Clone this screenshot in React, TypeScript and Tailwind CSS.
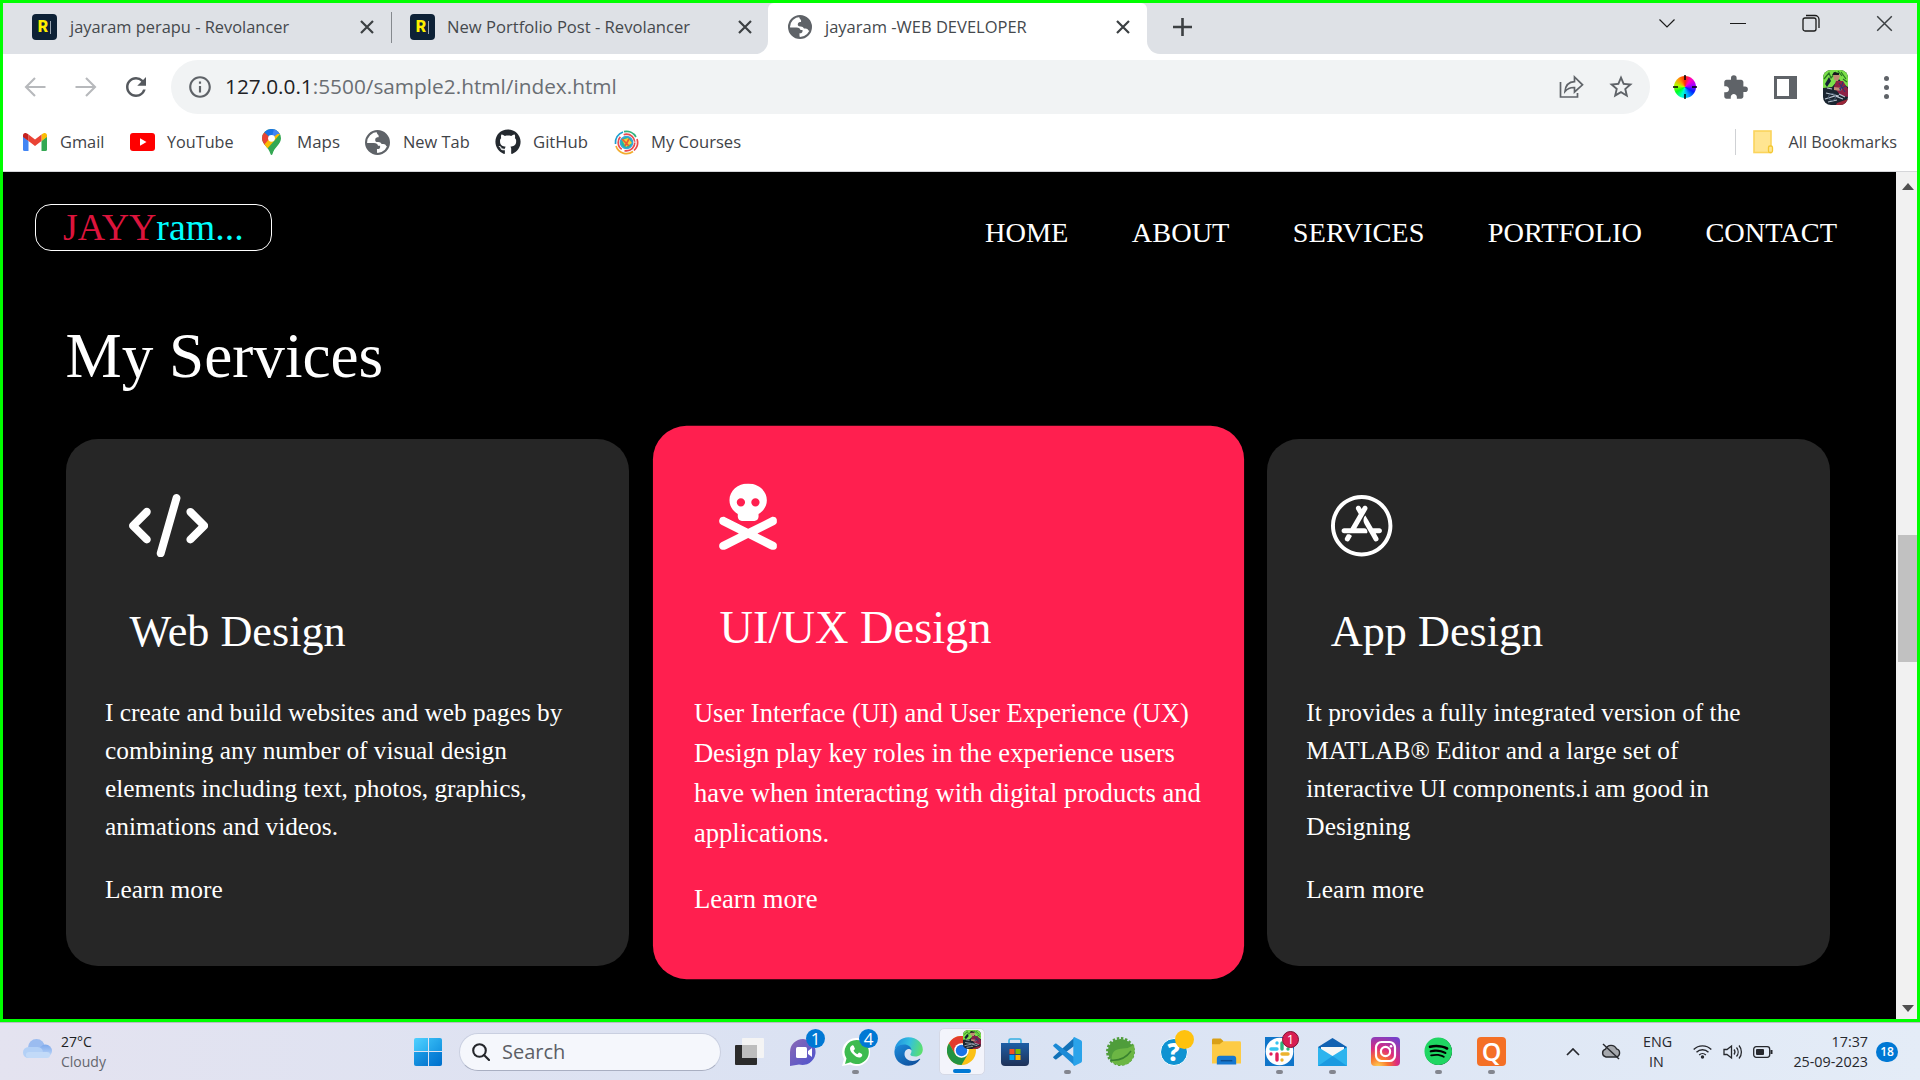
import type { ReactNode } from "react";
import { FaAppStore, FaCode, FaGithub, FaSkullCrossbones, FaSpotify } from "react-icons/fa6";
import { MdExtension, MdInfoOutline, MdRefresh, MdStarBorder } from "react-icons/md";

/* ---------- Browser tab strip ---------- */

function RevolancerIcon() {
  return (
    <span className="flex h-[26px] w-[25px] shrink-0 items-center justify-center gap-[2px] rounded-[4px] bg-[#0d2136]">
      <span className="font-['Roboto'] text-[16px] leading-none font-black text-[#ffee00]">R</span>
      <span className="h-[13px] w-px bg-[#9aa5b1]" />
    </span>
  );
}

function GlobeIcon({ className }: { className: string }) {
  return (
    <svg viewBox="0 0 24 24" className={className}>
      <circle cx="12" cy="12" r="11" fill="#fff" stroke="#5f6368" strokeWidth="2" />
      <path d="M11 1c6.500-.5 12 4.500 12 11 0 1.500-.3 3-.8 4l-1.700-.5c-.7-1.200-1.200-2-3-2h-1.500c-.8-1.300-1.500-2-3.200-2-2.200.2-3.300-.8-3-2.500.3-1.600 1.400-2 3.200-2 .4-1.500 0-2.200-1-3C11.300 3 11 2 11 1z" fill="#5f6368" />
      <path d="M1 12.500h7.500c2.500 0 3.500 1 4 2.500h2c.3 2.500-.5 3.300-3 3.300v2.500L12 23C5.800 23 1 18.500 1 12.500z" fill="#5f6368" />
    </svg>
  );
}

function CloseX({ size = 14, width = 2.2 }: { size?: number; width?: number }) {
  return (
    <svg width={size} height={size} viewBox="0 0 14 14" className="shrink-0" fill="none" stroke="#3c4043" strokeWidth={width}>
      <path d="M1 1l12 12M13 1L1 13" />
    </svg>
  );
}

function TabStrip() {
  return (
    <div className="flex h-[51px] bg-white text-[#45494d]">
      <div className="flex h-[51px] w-[389px] items-center bg-[#dee1e6] pb-[3px] pl-[29px]">
        <RevolancerIcon />
        <span className="ml-[13px] flex-1 text-[16.4px]">jayaram perapu - Revolancer</span>
        <CloseX />
        <span className="ml-[17px] h-[31px] w-px bg-[#85898e]" />
      </div>
      <div className="flex h-[51px] w-[376px] items-center rounded-br-[13px] bg-[#dee1e6] pb-[3px] pl-[18px]">
        <RevolancerIcon />
        <span className="ml-[12px] flex-1 text-[16.6px]">New Portfolio Post - Revolancer</span>
        <CloseX />
        <span className="w-[16px]" />
      </div>
      <div className="h-[51px] bg-[linear-gradient(#dee1e6_20px,#ffffff_20px)]">
        <div className="flex h-[51px] w-[379px] items-center rounded-t-[6px] bg-white pb-[3px] pl-[20px]">
          <GlobeIcon className="size-[24px] shrink-0" />
          <span className="ml-[13px] flex-1 text-[16.5px]">jayaram -WEB DEVELOPER</span>
          <CloseX />
          <span className="w-[17px]" />
        </div>
      </div>
      <div className="flex h-[51px] flex-1 items-start rounded-bl-[13px] bg-[#dee1e6]">
        <svg width="19" height="18" viewBox="0 0 19 18" className="mt-[15px] ml-[26px]" stroke="#3c4043" strokeWidth="2.6">
          <path d="M9.5 0v18M0 9h19" />
        </svg>
        <span className="flex-1" />
        <div className="mt-[10px] flex h-5 items-center text-[#1b1b1b]">
          <svg width="16" height="9" viewBox="0 0 16 9" fill="none" stroke="currentColor" strokeWidth="1.2">
            <path d="M.5.5L8 8l7.500-7.500" />
          </svg>
          <span className="ml-[55px] h-px w-[16px] bg-[#1b1b1b]" />
          <svg width="18" height="18" viewBox="0 0 18 18" className="ml-[56px]" fill="none" stroke="currentColor" strokeWidth="1.3">
            <rect x="1" y="4" width="13" height="13" rx="2" />
            <path d="M4 1.500h9a4 4 0 0 1 4 4V14" />
          </svg>
          <span className="ml-[56px] flex">
            <CloseX size={17} width={1.2} />
          </span>
          <span className="w-[24px]" />
        </div>
      </div>
    </div>
  );
}

/* ---------- Address bar ---------- */

function Arrow({ flip = false }: { flip?: boolean }) {
  return (
    <svg width="22" height="20" viewBox="0 0 22 20" className={flip ? "rotate-180" : ""} fill="none" stroke="#b7b9bc" strokeWidth="2.100">
      <path d="M21.500 10H2M11 1l-9 9 9 9" />
    </svg>
  );
}

function ColorWheel() {
  return (
    <span className="flex size-[24px] items-center justify-center">
      <span className="flex size-[22px] items-center justify-center rounded-full bg-[conic-gradient(#ff2a00,#ff00c8,#a000ff,#0020ff,#00a8ff,#00ffd0,#00ff20,#b0ff00,#ff9a00,#ff2a00)]">
        <svg width="24" height="24" viewBox="0 0 24 24" className="shrink-0" stroke="#000" strokeWidth="1.500">
          <path d="M12 0v5M12 19v5M0 12h5M19 12h5" />
        </svg>
      </span>
    </span>
  );
}

function Portrait({ className }: { className: string }) {
  return (
    <svg viewBox="0 0 25 35" className={className} preserveAspectRatio="none">
      <defs>
        <clipPath id="portrait">
          <rect width="25" height="35" rx="8" />
        </clipPath>
      </defs>
      <g clipPath="url(#portrait)">
        <rect width="25" height="35" fill="#1a2530" />
        <path d="M0 0h25v17l-5-3-4-5-7 8-9 1z" fill="#7be04a" />
        <path d="M1 9l5-6 2 5 5-6M18 2l5 7M15 1l4 5M20 9l4 3" stroke="#277422" strokeWidth="1.200" fill="none" />
        <path d="M2 14l4-7 2 4-4 6z" fill="#132034" />
        <path d="M10 4l5-1 2 3-2 5-4-1z" fill="#c08a74" />
        <path d="M9 5l2-3 5 1v2z" fill="#17171c" />
        <path d="M13 11h7l5 8v8l-8-2-6-8z" fill="#8d2246" />
        <path d="M11 17l8 1-1 3-7-1z" fill="#c08a74" />
        <path d="M16 13l6 9M20 12l-3 9M23 16l-7 3" stroke="#263a74" strokeWidth="1" />
        <path d="M4 18l5 1M3 23l13 3M2 29l10-3 8 3M5 32l9-2M16 24l6 3" stroke="#b8c3cf" strokeWidth="1.200" fill="none" />
        <path d="M14 33l11-4v6H13z" fill="#9b2638" />
        <circle cx="9" cy="27" r="3.500" fill="none" stroke="#4e6075" />
      </g>
    </svg>
  );
}

function Toolbar() {
  return (
    <div className="flex h-[66px] items-center bg-white">
      <div className="flex w-[168px] items-center pl-[21px]">
        <Arrow />
        <span className="w-[29px]" />
        <Arrow flip />
        <MdRefresh className="ml-[24px] size-[30px] text-[#55595e]" />
      </div>
      <div className="flex h-[54px] w-[1479px] items-center rounded-full bg-[#f1f3f4] pl-[16px]">
        <MdInfoOutline className="size-[26px] text-[#5f6368]" />
        <span className="ml-[12px] flex-1 text-[20.800px] text-[#6a6e73]">
          <span className="text-[#202124]">127.0.0.1</span>:5500/sample2.html/index.html
        </span>
        <svg width="25" height="24" viewBox="0 0 25 24" fill="none" stroke="#5f6368" strokeWidth="1.700">
          <path d="M1.500 7v15h17v-4" />
          <path d="M6 16.500c.5-6 3.500-9.500 9.500-9.800V2l8 7.800-8 7.200v-4.500c-4-.2-7 1-9.500 4z" />
        </svg>
        <MdStarBorder className="ml-[23px] size-[28px] text-[#5f6368]" />
        <span className="w-[15px]" />
      </div>
      <div className="flex flex-1 items-center pl-[23px]">
        <ColorWheel />
        <MdExtension className="ml-[25px] size-[27px] text-[#5f6368]" />
        <span className="ml-[25px] flex h-[23px] w-[23px] justify-end border-[3px] border-r-[8px] border-[#5f6368] bg-white" />
        <Portrait className="ml-[26px] h-[35px] w-[25px]" />
        <span className="ml-[36px] flex flex-col gap-[4px]">
          <span className="size-[5px] rounded-full bg-[#5f6368]" />
          <span className="size-[5px] rounded-full bg-[#5f6368]" />
          <span className="size-[5px] rounded-full bg-[#5f6368]" />
        </span>
      </div>
    </div>
  );
}

/* ---------- Bookmarks bar ---------- */

function GmailIcon() {
  return (
    <svg width="24" height="18" viewBox="0 0 24 18" className="shrink-0">
      <path d="M0 3v13.500A1.500 1.500 0 0 0 1.500 18H5.500V8z" fill="#4285f4" />
      <path d="M24 3v13.500a1.500 1.500 0 0 1-1.500 1.500h-4V8z" fill="#34a853" />
      <path d="M18.500 1.500V8L24 4V2.500c0-2.200-2.300-3.200-4-2z" fill="#fbbc04" />
      <path d="M5.500 8V1.500L12 6.400l6.500-4.900V8L12 12.900z" fill="#ea4335" />
      <path d="M0 2.500V4l5.500 4V1.500L4 .5C2.300-.7 0 .3 0 2.500z" fill="#c5221f" />
    </svg>
  );
}

function YouTubeIcon() {
  return (
    <svg width="25" height="18" viewBox="0 0 25 18" className="shrink-0">
      <rect width="25" height="18" rx="3" fill="#f00" />
      <path d="M10 5.200v7.600L16.500 9z" fill="#fff" />
    </svg>
  );
}

function MapsIcon() {
  return (
    <svg width="19" height="26" viewBox="0 0 19 26" className="shrink-0">
      <defs>
        <clipPath id="pin">
          <path d="M9.500 0A9.300 9.300 0 0 0 0 9.300c0 6 6.500 8.500 8.500 15.700.3 1.300 1.700 1.300 2 0C12.500 17.800 19 15.300 19 9.300A9.300 9.300 0 0 0 9.500 0z" />
        </clipPath>
      </defs>
      <g clipPath="url(#pin)">
        <rect width="19" height="26" fill="#34a853" />
        <path d="M0 0l2 3 7.500 6.500L3 17-2 12z" fill="#ea4335" />
        <path d="M2 16L14 2l5 2L5 20z" fill="#fbbc04" />
        <path d="M3 0h13L9.500 9.500 2 3z" fill="#1a73e8" />
        <path d="M12 0h7v5l-3.500 0L9.500 9.500z" fill="#4285f4" />
      </g>
      <circle cx="9.500" cy="9.300" r="3.400" fill="#fff" />
    </svg>
  );
}

function CoursesIcon() {
  return (
    <svg width="25" height="25" viewBox="0 0 25 25" className="shrink-0" fill="none" strokeWidth="1.700">
      <path d="M1.500 14A11 11 0 0 1 9 2" stroke="#1e9fd0" />
      <path d="M10 1.700A11 11 0 0 1 22 7" stroke="#35b27d" />
      <path d="M23 9a11 11 0 0 1-3 11.500" stroke="#e7484a" />
      <path d="M19 21.500A11 11 0 0 1 2 16" stroke="#f3ac2e" />
      <circle cx="12.500" cy="12.500" r="8.300" stroke="#e94b4f" strokeDasharray="15 3 14 4" />
      <circle cx="12.500" cy="12.500" r="6" fill="#25b79b" stroke="#36a5dc" />
      <path d="M8 10l6-2 4 5-6 4z" fill="#f6ce35" />
      <path d="M8 9l7 7M15 9l-4 7" stroke="#e85b37" />
    </svg>
  );
}

function BookmarksBar() {
  return (
    <div className="flex h-[52px] items-center border-b border-[#d5d6d9] bg-white pb-[7px] text-[16.600px] text-[#3f4347]">
      <span className="flex w-[107px] items-center gap-[13px] pl-[20px]">
        <GmailIcon />
        <span className="text-[16.400px]">Gmail</span>
      </span>
      <span className="flex w-[132px] items-center gap-[12px] pl-[20px]">
        <YouTubeIcon />
        <span className="text-[16.200px]">YouTube</span>
      </span>
      <span className="flex w-[103px] items-center gap-[16px] pl-[20px]">
        <MapsIcon />
        <span className="text-[16.900px]">Maps</span>
      </span>
      <span className="flex w-[130px] items-center gap-[13px] pl-[20px]">
        <GlobeIcon className="size-[25px] shrink-0" />
        <span className="text-[16.400px]">New Tab</span>
      </span>
      <span className="flex w-[119px] items-center gap-[12px] pl-[20px]">
        <FaGithub className="size-[26px] shrink-0 text-[#24292f]" />
        <span className="text-[16.700px]">GitHub</span>
      </span>
      <span className="flex flex-1 items-center gap-[12px] pl-[20px]">
        <CoursesIcon />
        <span>My Courses</span>
      </span>
      <span className="mr-[17px] h-[26px] w-px bg-[#cfd1d4]" />
      <svg width="21" height="24" viewBox="0 0 21 24">
        <rect x="1" y="1" width="17" height="21.500" fill="#ffe591" stroke="#fbd45c" strokeWidth="1.600" />
        <rect x="15.500" y="16" width="4" height="6.500" rx="1.500" fill="#ffe591" stroke="#f3c832" strokeWidth="1.300" />
      </svg>
      <span className="mr-[20px] ml-[15px] text-[16.300px]">All Bookmarks</span>
    </div>
  );
}

/* ---------- Portfolio page ---------- */

type Service = { title: string; icon: ReactNode; lines: string[]; highlighted?: boolean };

const services: Service[] = [
  {
    title: "Web Design",
    icon: <FaCode className="h-[63.400px] w-[79.200px]" />,
    lines: [
      "I create and build websites and web pages by",
      "combining any number of visual design",
      "elements including text, photos, graphics,",
      "animations and videos.",
    ],
  },
  {
    title: "UI/UX Design",
    icon: <FaSkullCrossbones className="h-[63.400px] w-[55.400px]" />,
    lines: [
      "User Interface (UI) and User Experience (UX)",
      "Design play key roles in the experience users",
      "have when interacting with digital products and",
      "applications.",
    ],
    highlighted: true,
  },
  {
    title: "App Design",
    icon: <FaAppStore className="size-[63.400px]" />,
    lines: [
      "It provides a fully integrated version of the",
      "MATLAB® Editor and a large set of",
      "interactive UI components.i am good in",
      "Designing",
    ],
  },
];

function ServiceCard({ title, icon, lines, highlighted }: Service) {
  return (
    <article
      className={
        highlighted
          ? "h-[527px] scale-105 rounded-[32px] bg-[#ff1f4f] px-[39px] pt-[54.500px]"
          : "h-[527px] rounded-[32px] bg-[#262626] px-[39px] pt-[54.500px]"
      }
    >
      <div className="ml-[24px] h-[63.500px]">{icon}</div>
      <h2 className="mt-[50px] ml-[24.500px] text-[44.200px] leading-[50px]">{title}</h2>
      <p className="mt-[36px] text-[25.350px] leading-[38px] whitespace-nowrap">
        {lines.map((line) => (
          <span key={line} className="block">
            {line}
          </span>
        ))}
      </p>
      <p className="mt-[25.400px] text-[25.400px] leading-[38px]">Learn more</p>
    </article>
  );
}

function Portfolio() {
  return (
    <main className="h-[847px] w-[1893px] bg-black font-['Liberation_Serif',serif] text-white">
      <header className="flex h-[112px] items-start pt-[32px] pl-[32px]">
        <div className="flex h-[47px] w-[237px] items-center rounded-[16px] border-[1.300px] border-white pl-[27px] text-[37.900px] leading-none">
          <span className="text-[#dc143c]">JAYY</span>
          <span className="text-[#00ffff]">ram...</span>
        </div>
        <nav className="mt-[11px] mr-[59px] flex flex-1 justify-end gap-[63.400px] text-[28.350px] leading-[36px]">
          <span>HOME</span>
          <span>ABOUT</span>
          <span>SERVICES</span>
          <span>PORTFOLIO</span>
          <span>CONTACT</span>
        </nav>
      </header>
      <section className="pt-[36px] pr-[66px] pl-[63px]">
        <h1 className="-ml-[0.5px] text-[63.200px] leading-[72px]">My Services</h1>
        <div className="mt-[47px] grid grid-cols-3 gap-[38px]">
          {services.map((s) => (
            <ServiceCard key={s.title} {...s} />
          ))}
        </div>
      </section>
    </main>
  );
}

function Scrollbar() {
  return (
    <aside className="flex w-[21px] flex-col items-end bg-[#f1f1f1] py-[11px]">
      <svg width="12" height="7" viewBox="0 0 12 7" className="mr-[3px]">
        <path d="M0 7l6-7 6 7z" fill="#505050" />
      </svg>
      <span className="mt-[345px] h-[127px] w-[19px] bg-[#c1c1c1]" />
      <span className="flex-1" />
      <svg width="12" height="7" viewBox="0 0 12 7" className="mr-[3px] -mb-[4px]">
        <path d="M0 0l6 7 6-7z" fill="#505050" />
      </svg>
    </aside>
  );
}

/* ---------- Windows taskbar ---------- */

function TaskViewIcon() {
  return (
    <svg width="29" height="28" viewBox="0 0 29 28">
      <rect y="7" width="22" height="20" rx="1" fill="#2b2b2b" />
      <rect x="7" width="22" height="20" rx="1" fill="#f4f4f4" />
      <rect x="7" y="7" width="15" height="13" fill="#bdbdbd" />
    </svg>
  );
}

function ChatIcon() {
  return (
    <svg width="28" height="28" viewBox="0 0 28 28">
      <defs>
        <linearGradient id="chat" x1="0" y1="0" x2="1" y2="1">
          <stop offset="0" stopColor="#8b68b4" />
          <stop offset="1" stopColor="#4b53cf" />
        </linearGradient>
      </defs>
      <path d="M14 1a13 13 0 1 1-4 25.500L1 28V14A13 13 0 0 1 14 1z" fill="url(#chat)" />
      <rect x="7" y="9" width="11" height="11" rx="1.500" fill="#fff" />
      <path d="M19 13l4-3v9l-4-3z" fill="#fff" />
    </svg>
  );
}

function WhatsAppIcon() {
  return (
    <svg width="28" height="28" viewBox="0 0 28 28">
      <path d="M14 0a14 14 0 1 1-6 26.500L0 28l2-7A14 14 0 0 1 14 0z" fill="#fff" />
      <path d="M14.500 2a12 12 0 1 1-6 22.200L3 26l1.500-5.500A12 12 0 0 1 14.500 2z" fill="#3dbb4f" />
      <path d="M10 7.500c-3 1.500-2.500 5 1 8.500s7 5 9 2c1-1.600-.5-2.500-3-3.500l-1.600 1.700c-2-.8-3-2-3.900-3.700L13 11c-1-2.700-1.400-4.200-3-3.500z" fill="#fff" />
    </svg>
  );
}

function EdgeIcon() {
  return (
    <svg width="29" height="29" viewBox="0 0 29 29">
      <defs>
        <linearGradient id="edgeTop" x1="0" y1="0.300" x2="1" y2="0.500">
          <stop offset="0" stopColor="#1f8fe0" />
          <stop offset="0.5" stopColor="#33bfe0" />
          <stop offset="1" stopColor="#5ce06e" />
        </linearGradient>
        <linearGradient id="edgeLow" x1="0" y1="0" x2="0.8" y2="1">
          <stop offset="0" stopColor="#1b8cdc" />
          <stop offset="1" stopColor="#0f4f9c" />
        </linearGradient>
      </defs>
      <path d="M.5 13C1.500 5.500 7 .3 14.500.3 23 .3 28.800 6 28.800 12.500c0 4.500-3.500 7-7.500 7-3 0-5-.8-5-2 0-.8 1.200-1.300 1.200-3.500 0-3-3-5.500-7-5.500C5.500 8.500 2 10.500.5 13z" fill="url(#edgeTop)" />
      <path d="M.4 15c0-4.500 4.600-7.500 9.600-7.500 4.300 0 7.500 2.600 7.500 6-1-1.200-2.600-1.700-4-1.300-2 .7-3 2.600-3 4.800 0 4 3.500 7 8 7 3.500 0 5.500-1.500 7.200-2.300.5-.1.700.3.5.6A14.300 14.300 0 0 1 14.500 28.700C6.500 28.700.4 22.500.4 15z" fill="url(#edgeLow)" />
    </svg>
  );
}

function ChromeIcon() {
  return (
    <svg width="29" height="29" viewBox="0 0 48 48">
      <circle cx="24" cy="24" r="24" fill="#fbc116" />
      <path d="M24 12h20.800A24 24 0 0 0 3.200 12L13.600 30z" fill="#e33b2e" />
      <path d="M3.200 12A24 24 0 0 0 24 48L34.400 30 24 36 13.600 30z" fill="#229342" />
      <circle cx="24" cy="24" r="12" fill="#fff" />
      <circle cx="24" cy="24" r="9.500" fill="#1a73e8" />
    </svg>
  );
}

function StoreIcon() {
  return (
    <svg width="28" height="28" viewBox="0 0 28 28">
      <defs>
        <linearGradient id="bag" x1="0" y1="0" x2="0" y2="1">
          <stop offset="0" stopColor="#1d5ea6" />
          <stop offset="1" stopColor="#1f3157" />
        </linearGradient>
      </defs>
      <path d="M8 7V2.500A1.500 1.500 0 0 1 9.500 1h9A1.500 1.500 0 0 1 20 2.500V7" fill="none" stroke="#35aee2" strokeWidth="1.600" />
      <path d="M0 5h28v19a4 4 0 0 1-4 4H4a4 4 0 0 1-4-4z" fill="url(#bag)" />
      <rect x="8.500" y="11" width="5" height="5" fill="#f25022" />
      <rect x="14.500" y="11" width="5" height="5" fill="#7fba00" />
      <rect x="8.500" y="17" width="5" height="5" fill="#00a4ef" />
      <rect x="14.500" y="17" width="5" height="5" fill="#ffb900" />
    </svg>
  );
}

function VsCodeIcon() {
  return (
    <svg width="29" height="29" viewBox="0 0 100 100">
      <path d="M75 1L2 67c-2 2-2 4 0 5l5 5c2 1 4 1 5 0L75 29z" fill="#1272b8" />
      <path d="M75 99L2 33c-2-2-2-4 0-5l5-5c2-1 4-1 5 0l63 48z" fill="#1b8ad6" />
      <path d="M75 1l21 10c2 1 4 3 4 6v66c0 3-2 5-4 6L75 99c-3 1-5-1-5-3V4c0-2 2-4 5-3z" fill="#2aa3ea" />
    </svg>
  );
}

function SpringIcon() {
  return (
    <svg width="29" height="29" viewBox="0 0 29 29">
      <circle cx="14.500" cy="14.500" r="12.600" fill="#4f9d3b" />
      <circle cx="14.500" cy="14.500" r="13.200" fill="none" stroke="#4f9d3b" strokeWidth="2.500" strokeDasharray="2.400 1.750" />
      <path d="M28 7c1 8 1 14-5 19-5 3.500-13 3-17-1 0 0-2-9 4-12 6-2.500 13 0 18-6z" fill="#6cb644" />
      <path d="M4 23c8 1 16-2 21-9" stroke="#39822e" strokeWidth="1.500" fill="none" />
    </svg>
  );
}

function HelpIcon() {
  return (
    <span className="flex size-[28px] items-center justify-center rounded-full border-[1.500px] border-white bg-[#0f93d2] font-['Open_Sans'] text-[24px] leading-none font-extrabold text-white">
      ?
    </span>
  );
}

function FolderIcon() {
  return (
    <svg width="30" height="27" viewBox="0 0 30 27">
      <path d="M0 1.500A1.500 1.500 0 0 1 1.500 0H9l3 3-3 4H0z" fill="#d9a016" />
      <path d="M9 5l3-2h16.500A1.500 1.500 0 0 1 30 4.500V26H0V6h8z" fill="#fdcb45" />
      <path d="M5 27v-6a3 3 0 0 1 3-3h14a3 3 0 0 1 3 3v6z" fill="#1678cf" />
      <path d="M9 23h12" stroke="#0b4f92" strokeWidth="1.500" />
    </svg>
  );
}

function SlackIcon() {
  return (
    <svg width="29" height="29" viewBox="0 0 29 29" strokeWidth="3.400" strokeLinecap="round">
      <rect width="29" height="29" fill="#0f75c9" />
      <circle cx="14.500" cy="14.500" r="13.800" fill="#fff" />
      <path d="M12 6v.1M6 12h6" stroke="#36c5f0" />
      <path d="M17 6v6M23 12v.1" stroke="#2eb67d" />
      <path d="M17 17h6M17 23v.1" stroke="#ecb22e" />
      <path d="M12 17v6M6 17v.1" stroke="#e01e5a" />
    </svg>
  );
}

function MailIcon() {
  return (
    <svg width="29" height="28" viewBox="0 0 29 28">
      <path d="M0 9L14.500 0 29 9v6H0z" fill="#1262b2" />
      <path d="M3 9h23v10H3z" fill="#f7f7f7" />
      <path d="M0 9l14.500 9L29 9v19H0z" fill="#2db4ee" />
      <path d="M0 28l14.500-10L29 28z" fill="#1b9ae0" />
    </svg>
  );
}

function InstagramIcon() {
  return (
    <svg width="29" height="29" viewBox="0 0 29 29">
      <defs>
        <radialGradient id="insta" cx="0.25" cy="1.050" r="1.150">
          <stop offset="0" stopColor="#ffd95a" />
          <stop offset="0.3" stopColor="#f9762d" />
          <stop offset="0.58" stopColor="#dc2a7f" />
          <stop offset="1" stopColor="#7740c9" />
        </radialGradient>
      </defs>
      <rect width="29" height="29" rx="4" fill="url(#insta)" />
      <rect x="5" y="5" width="19" height="19" rx="5.500" fill="none" stroke="#fff" strokeWidth="2.200" />
      <circle cx="14.500" cy="14.500" r="4.600" fill="none" stroke="#fff" strokeWidth="2.200" />
      <circle cx="20" cy="9.300" r="1.300" fill="#fff" />
    </svg>
  );
}

function SpotifyIcon() {
  return (
    <span className="flex size-[27px] items-center justify-center rounded-full bg-black">
      <FaSpotify className="size-[28.500px] shrink-0 text-[#1fd662]" />
    </span>
  );
}

function QuoraIcon() {
  return (
    <span className="flex size-[29px] items-center justify-center rounded-[4px] bg-[#f47026] font-['Open_Sans'] text-[25px] leading-none font-semibold text-white">
      Q
    </span>
  );
}

type TaskItem = { name: string; icon: ReactNode; badge?: ReactNode; running?: boolean; active?: boolean };

const blueBadge = "absolute -top-[8px] -right-[8px] flex size-[19px] items-center justify-center rounded-full bg-[#0078d4] text-[17px] leading-none text-white";

const taskItems: TaskItem[] = [
  { name: "task view", icon: <TaskViewIcon /> },
  { name: "chat", icon: <ChatIcon />, badge: <span className={blueBadge}>1</span> },
  { name: "whatsapp", icon: <WhatsAppIcon />, badge: <span className={blueBadge}>4</span>, running: true },
  { name: "edge", icon: <EdgeIcon /> },
  {
    name: "chrome",
    icon: <ChromeIcon />,
    badge: <Portrait className="absolute -top-[6px] -right-[5px] h-[19px] w-[18px]" />,
    active: true,
  },
  { name: "store", icon: <StoreIcon /> },
  { name: "vscode", icon: <VsCodeIcon />, running: true },
  { name: "spring", icon: <SpringIcon /> },
  { name: "help", icon: <HelpIcon />, badge: <span className="absolute -top-[7px] -right-[6px] size-[19px] rounded-full bg-[#ffc20e]" /> },
  { name: "explorer", icon: <FolderIcon /> },
  {
    name: "slack",
    icon: <SlackIcon />,
    badge: (
      <span className="absolute -top-[6px] -right-[5px] flex size-[17px] items-center justify-center rounded-full border border-[#7d1233] bg-[#d81e52] text-[13px] leading-none text-white">
        1
      </span>
    ),
    running: true,
  },
  { name: "mail", icon: <MailIcon />, running: true },
  { name: "instagram", icon: <InstagramIcon /> },
  { name: "spotify", icon: <SpotifyIcon />, running: true },
  { name: "quora", icon: <QuoraIcon />, running: true },
];

function TaskButton({ icon, badge, running, active }: TaskItem) {
  return (
    <div className="flex w-[53px] justify-center">
      <div
        className={
          active
            ? "flex h-[47px] w-[46px] flex-col items-center justify-end rounded-[5px] border border-[#d5d9e6] bg-[#f3f4fb]"
            : "flex h-[47px] w-[46px] flex-col items-center justify-end"
        }
      >
        <div className="relative flex size-[29px] items-center justify-center">
          {icon}
          {badge}
        </div>
        <div className="mt-[4px] flex h-[5px]">
          {active && <span className="h-[4px] w-[18px] rounded-full bg-[#0078d4]" />}
          {running && <span className="h-[4px] w-[7px] rounded-full bg-[#83868f]" />}
        </div>
      </div>
    </div>
  );
}

function Taskbar() {
  return (
    <footer className="flex h-[58px] items-center border-t border-[#b9bcc4] bg-linear-to-r from-[#e4e3f0] via-[#d9e2f3] to-[#e4ecf7] text-[#26282d]">
      <div className="flex w-[414px] items-center pl-[23px] text-[14px] leading-[20px]">
        <svg width="29" height="20" viewBox="0 0 29 20" className="mb-[6px]">
          <defs>
            <linearGradient id="cloud" x1="0" y1="0" x2="0" y2="1">
              <stop offset="0" stopColor="#7ea9ec" />
              <stop offset="1" stopColor="#c5dcfa" />
            </linearGradient>
          </defs>
          <circle cx="13.500" cy="8.500" r="8.500" fill="#9bbcf0" />
          <circle cx="22.500" cy="12" r="6.500" fill="url(#cloud)" />
          <rect y="8" width="20" height="11" rx="5.500" fill="#b3d0f6" />
          <rect x="3" y="13" width="24" height="6" rx="3" fill="#c2daf8" />
        </svg>
        <span className="ml-[9px] flex flex-col">
          <span className="text-[#1d1f23]">27°C</span>
          <span className="text-[#63666e]">Cloudy</span>
        </span>
      </div>
      <div className="grid size-[28px] grid-cols-2 gap-px">
        <span className="rounded-tl-[2px] bg-linear-to-br from-[#4fd0ff] to-[#2ab0f0]" />
        <span className="rounded-tr-[2px] bg-linear-to-br from-[#33b7f2] to-[#1596e2]" />
        <span className="rounded-bl-[2px] bg-linear-to-br from-[#1b9fe8] to-[#0a78d0]" />
        <span className="rounded-br-[2px] bg-linear-to-br from-[#128bde] to-[#0070cc]" />
      </div>
      <div className="ml-[17px] flex h-[38px] w-[262px] items-center rounded-full border border-[#c9cfe0] border-b-[#a9afc2] bg-[#f5f7fc] pl-[12px]">
        <svg width="18" height="18" viewBox="0 0 18 18" fill="none" stroke="#24262b" strokeWidth="2.100">
          <circle cx="7.500" cy="7.500" r="6.300" />
          <path d="M12 12l5 5" strokeLinecap="round" />
        </svg>
        <span className="ml-[12px] text-[20px] text-[#5c5f66]">Search</span>
      </div>
      <div className="ml-[2px] flex">
        {taskItems.map((t) => (
          <TaskButton key={t.name} {...t} />
        ))}
      </div>
      <div className="flex flex-1 items-center text-[14.300px] leading-[19.500px]">
        <svg width="14" height="8" viewBox="0 0 14 8" className="ml-[48px]" fill="none" stroke="currentColor" strokeWidth="1.700">
          <path d="M1 7l6-6 6 6" />
        </svg>
        <svg width="20" height="17" viewBox="0 0 20 17" className="ml-[21px]" fill="none" stroke="currentColor" strokeWidth="1.400">
          <path d="M5 14a4 4 0 0 1-.5-7.800 6 6 0 0 1 11-.4A4.200 4.200 0 0 1 15 14z" fill="#a5a8ad" />
          <path d="M2 1l16 15" />
        </svg>
        <span className="ml-[22px] w-[27px] text-center">
          ENG
          <br />
          IN
        </span>
        <svg width="19" height="15" viewBox="0 0 19 15" className="ml-[23px]" fill="none" stroke="currentColor" strokeWidth="1.400">
          <path d="M.7 5.500a12.400 12.400 0 0 1 17.600 0M3.500 8.300a8.500 8.500 0 0 1 12 0M6.200 11a4.700 4.700 0 0 1 6.600 0" />
          <circle cx="9.500" cy="13" r="1.700" fill="currentColor" stroke="none" />
        </svg>
        <svg width="20" height="16" viewBox="0 0 20 16" className="ml-[11px]" fill="none" stroke="currentColor" strokeWidth="1.300">
          <path d="M1 5.500h3L8.500 2v12L4 10.500H1z" />
          <path d="M11 5.500a4 4 0 0 1 0 5M13.500 3.500a7 7 0 0 1 0 9M16 1.500a10 10 0 0 1 0 13" />
        </svg>
        <svg width="20" height="12" viewBox="0 0 20 12" className="ml-[10px]" fill="none" stroke="currentColor" strokeWidth="1.300">
          <rect x=".7" y=".7" width="16" height="10.600" rx="2.500" />
          <rect x="3" y="3" width="8" height="6" rx="1" fill="currentColor" stroke="none" />
          <path d="M18.500 4v4" strokeWidth="2" />
        </svg>
        <span className="ml-auto text-right">
          17:37
          <br />
          25-09-2023
        </span>
        <span className="mr-[22px] ml-[8px] flex h-[20px] w-[22px] items-center justify-center rounded-full bg-[#0078d4] text-[12px] font-semibold text-white">
          18
        </span>
      </div>
    </footer>
  );
}

export default function App() {
  return (
    <div className="flex h-[1080px] w-[1920px] flex-col overflow-hidden bg-white font-['Open_Sans',sans-serif]">
      <div className="h-[1022px] overflow-hidden border-[3px] border-[#00ff00]">
        <TabStrip />
        <Toolbar />
        <BookmarksBar />
        <div className="flex h-[847px]">
          <Portfolio />
          <Scrollbar />
        </div>
      </div>
      <Taskbar />
    </div>
  );
}
